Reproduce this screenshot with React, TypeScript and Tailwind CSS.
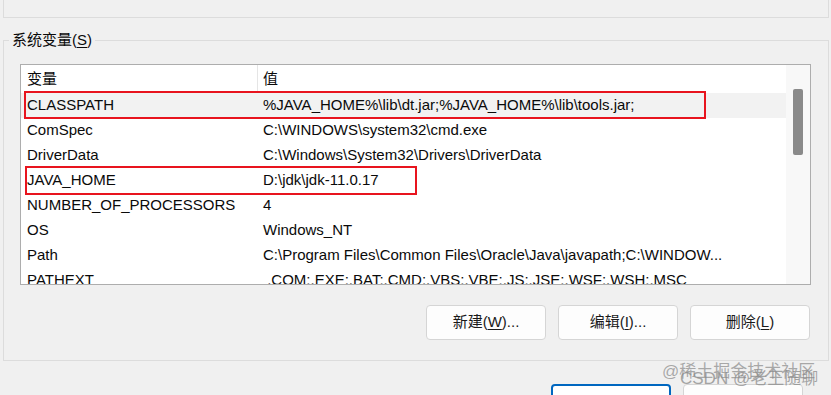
import React from 'react';

const rows = [
  { name: 'CLASSPATH', value: '%JAVA_HOME%\\lib\\dt.jar;%JAVA_HOME%\\lib\\tools.jar;', selected: true },
  { name: 'ComSpec', value: 'C:\\WINDOWS\\system32\\cmd.exe' },
  { name: 'DriverData', value: 'C:\\Windows\\System32\\Drivers\\DriverData' },
  { name: 'JAVA_HOME', value: 'D:\\jdk\\jdk-11.0.17' },
  { name: 'NUMBER_OF_PROCESSORS', value: '4' },
  { name: 'OS', value: 'Windows_NT' },
  { name: 'Path', value: 'C:\\Program Files\\Common Files\\Oracle\\Java\\javapath;C:\\WINDOW...' },
  { name: 'PATHEXT', value: ' .COM;.EXE;.BAT;.CMD;.VBS;.VBE;.JS;.JSE;.WSF;.WSH;.MSC' },
];

const font = { fontFamily: '"Liberation Sans", "Noto Sans CJK SC", sans-serif' };

const WinButton: React.FC<{ children?: React.ReactNode; focused?: boolean }> = ({ children, focused }) => (
  <button
    className={
      focused
        ? 'w-[120px] h-[35px] rounded-[4px] bg-white border-2 border-[#0067c0] text-[15px] text-[#1a1a1a] flex items-center justify-center'
        : 'w-[120px] h-[35px] rounded-[4px] bg-[#fdfdfd] border border-[#d5d5d5] text-[15px] text-[#1a1a1a] flex items-center justify-center'
    }
  >
    {children}
  </button>
);

const App: React.FC = () => {
  return (
    <div className="w-[831px] h-[395px] bg-[#f0f0f0] relative overflow-hidden text-[#0a0a0a]" style={font}>
      {/* previous group box tail */}
      <div className="ml-[3px] w-[826px] h-[18px] border-l border-r border-b border-[#dcdcdc]" />

      {/* 系统变量 group */}
      <div className="ml-[3px] mt-[22px] w-[826px] h-[321px] border border-[#dcdcdc] relative">
        <div className="absolute left-[5px] top-[-10px] px-[3px] bg-[#f0f0f0] text-[15px] leading-[18px]">
          系统变量(<span className="underline underline-offset-2">S</span>)
        </div>

        {/* list view */}
        <div className="ml-[16px] mt-[23px] w-[791px] h-[221px] border border-[#adadad] bg-white flex">
          <div className="flex-1 overflow-hidden">
            <div className="flex h-[28px] text-[15px]">
              <div className="w-[237px] pl-[6px] pt-[1px] flex items-center border-r border-[#e5e5e5]">变量</div>
              <div className="flex-1 pl-[5px] pt-[1px] flex items-center">值</div>
            </div>
            {rows.map((r) => (
              <div
                key={r.name}
                className={
                  r.selected
                    ? 'flex h-[25px] items-center text-[15px] whitespace-nowrap bg-[#f2f2f2]'
                    : 'flex h-[25px] items-center text-[15px] whitespace-nowrap'
                }
              >
                <div className="w-[237px] pl-[6px]">{r.name}</div>
                <div className="flex-1 pl-[5px] whitespace-pre">{r.value}</div>
              </div>
            ))}
          </div>
          {/* scrollbar */}
          <div className="w-[24px] bg-[#f8f8f8] pt-[24px] flex justify-center">
            <div className="w-[10px] h-[66px] bg-[#8a8a8a] rounded-[2px]" />
          </div>
        </div>

        {/* red highlight boxes */}
        <div className="absolute left-[20px] top-[50px] w-[682px] h-[28px] border-[2.5px] border-[#e8141e]" />
        <div className="absolute left-[21px] top-[125px] w-[392px] h-[29px] border-[2.5px] border-[#e8141e]" />

        <div className="flex justify-end gap-[12px] pr-[18px] mt-[20px]">
          <WinButton>
            新建(<span className="underline underline-offset-2">W</span>)...
          </WinButton>
          <WinButton>
            编辑(<span className="underline underline-offset-2">I</span>)...
          </WinButton>
          <WinButton>
            删除(<span className="underline underline-offset-2">L</span>)
          </WinButton>
        </div>
      </div>

      {/* dialog buttons (labels fall below the visible area) */}
      <div className="flex gap-[12px] ml-[551px] mt-[23px]">
        <WinButton focused />
        <WinButton />
      </div>

      {/* watermark */}
      <div className="absolute left-[662px] top-[359px] text-[17px] text-[#8f8f8f]/75 whitespace-nowrap">
        @稀土掘金技术社区
      </div>
      <div className="absolute left-[680px] top-[366px] text-[17px] text-[#8a8a8a]/75 whitespace-nowrap">
        CSDN @老王随聊
      </div>
    </div>
  );
};

export default App;
